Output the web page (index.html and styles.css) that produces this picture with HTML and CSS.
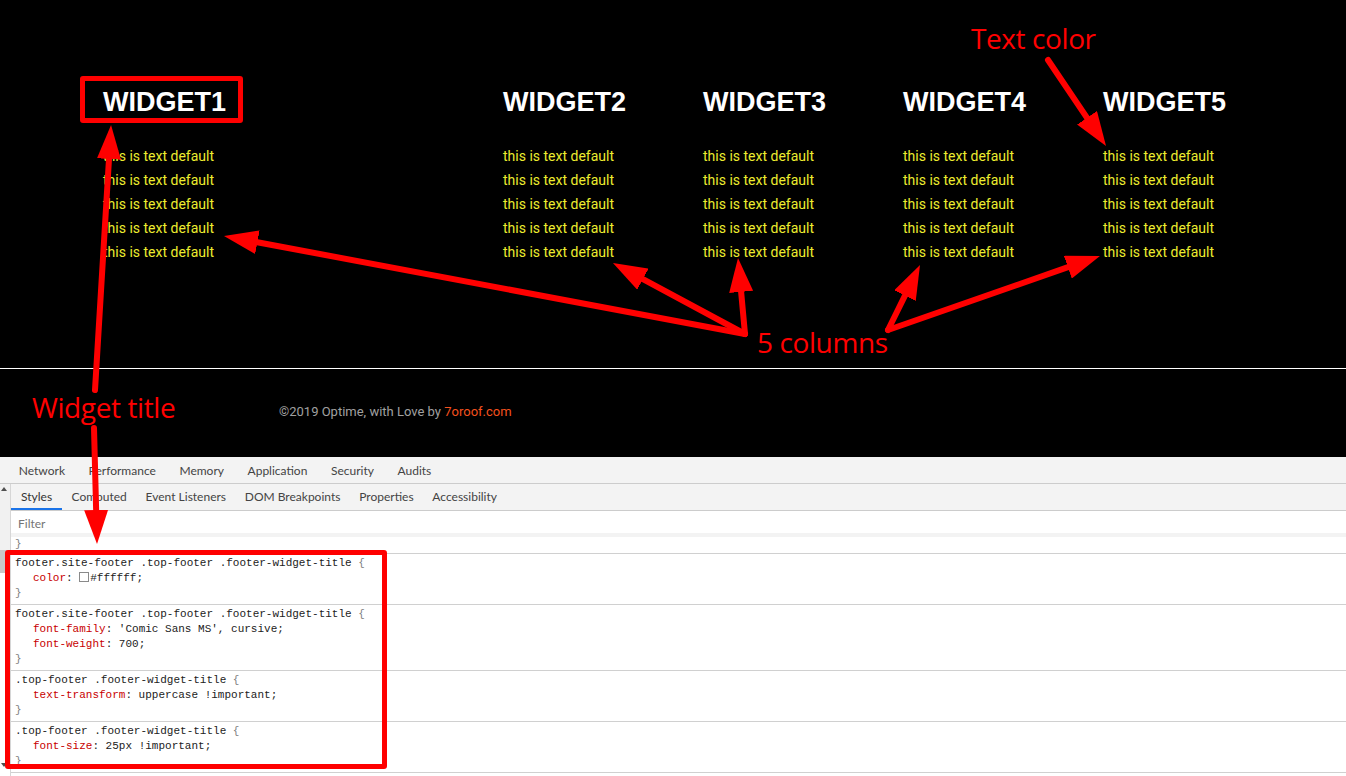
FILE: index.html
```html
<!DOCTYPE html>
<html lang="en">
<head>
<meta charset="utf-8">
<title>Footer widgets</title>
<link rel="stylesheet" href="styles.css">
</head>
<body>
<footer class="site-footer">
  <div class="top-footer">
    <div class="widgets">
      <div class="widget">
        <h3 class="footer-widget-title">Widget1</h3>
        <ul class="widget-list">
          <li>this is text default</li><li>this is text default</li><li>this is text default</li><li>this is text default</li><li>this is text default</li>
        </ul>
      </div>
      <div class="widget">
        <h3 class="footer-widget-title">Widget2</h3>
        <ul class="widget-list">
          <li>this is text default</li><li>this is text default</li><li>this is text default</li><li>this is text default</li><li>this is text default</li>
        </ul>
      </div>
      <div class="widget">
        <h3 class="footer-widget-title">Widget3</h3>
        <ul class="widget-list">
          <li>this is text default</li><li>this is text default</li><li>this is text default</li><li>this is text default</li><li>this is text default</li>
        </ul>
      </div>
      <div class="widget">
        <h3 class="footer-widget-title">Widget4</h3>
        <ul class="widget-list">
          <li>this is text default</li><li>this is text default</li><li>this is text default</li><li>this is text default</li><li>this is text default</li>
        </ul>
      </div>
      <div class="widget">
        <h3 class="footer-widget-title">Widget5</h3>
        <ul class="widget-list">
          <li>this is text default</li><li>this is text default</li><li>this is text default</li><li>this is text default</li><li>this is text default</li>
        </ul>
      </div>
    </div>
  </div>
  <div class="bottom-footer">
    <p class="copyright">©2019 Optime, with Love by <a class="copyright-link" href="#">7oroof.com</a></p>
  </div>
</footer>

<section class="devtools">
  <nav class="main-tabs">
    <span class="tab">Network</span>
    <span class="tab">Performance</span>
    <span class="tab">Memory</span>
    <span class="tab">Application</span>
    <span class="tab">Security</span>
    <span class="tab">Audits</span>
  </nav>
  <div class="panel">
    <div class="scroll-strip">
      <div class="scroll-top"><span class="arrow-up"></span><span class="thumb"></span></div>
      <span class="arrow-down"></span>
    </div>
    <div class="pane">
      <nav class="sub-tabs">
        <span class="subtab active">Styles</span>
        <span class="subtab">Computed</span>
        <span class="subtab">Event Listeners</span>
        <span class="subtab">DOM Breakpoints</span>
        <span class="subtab">Properties</span>
        <span class="subtab">Accessibility</span>
      </nav>
      <div class="filter">Filter</div>
      <div class="rule rule-tail"><span class="brace">}</span></div>
      <div class="rule">
        <div class="line"><span class="sel">footer.site-footer .top-footer .footer-widget-title</span> <span class="brace">{</span></div>
        <div class="line decl"><span class="prop">color</span>: <span class="swatch"></span>#ffffff;</div>
        <div class="line"><span class="brace">}</span></div>
      </div>
      <div class="rule">
        <div class="line"><span class="sel">footer.site-footer .top-footer .footer-widget-title</span> <span class="brace">{</span></div>
        <div class="line decl"><span class="prop">font-family</span>: 'Comic Sans MS', cursive;</div>
        <div class="line decl"><span class="prop">font-weight</span>: 700;</div>
        <div class="line"><span class="brace">}</span></div>
      </div>
      <div class="rule">
        <div class="line"><span class="sel">.top-footer .footer-widget-title</span> <span class="brace">{</span></div>
        <div class="line decl"><span class="prop">text-transform</span>: uppercase !important;</div>
        <div class="line"><span class="brace">}</span></div>
      </div>
      <div class="rule">
        <div class="line"><span class="sel">.top-footer .footer-widget-title</span> <span class="brace">{</span></div>
        <div class="line decl"><span class="prop">font-size</span>: 25px !important;</div>
        <div class="line"><span class="brace">}</span></div>
      </div>
    </div>
  </div>
</section>

<svg class="arrows" width="1346" height="776" viewBox="0 0 1346 776" aria-hidden="true">
  <defs>
    <marker id="head" markerUnits="userSpaceOnUse" markerWidth="34" markerHeight="24" refX="10" refY="12" orient="auto">
      <path d="M0,0 L34,12 L0,24 Z" fill="#ff0000"/>
    </marker>
  </defs>
  <g stroke="#ff0000" stroke-width="6" stroke-linecap="round" fill="none" marker-end="url(#head)">
    <line x1="1048" y1="60" x2="1092.6" y2="126.1"/>
    <line x1="95" y1="390" x2="109.6" y2="149"/>
    <line x1="94" y1="428" x2="96.4" y2="520"/>
    <line x1="745" y1="334" x2="247.6" y2="240.4"/>
    <line x1="745" y1="334" x2="634.1" y2="274.4"/>
    <line x1="745" y1="334" x2="740.2" y2="281.9"/>
    <line x1="888" y1="330" x2="909.4" y2="286.6"/>
    <line x1="888" y1="330" x2="1077.3" y2="263.9"/>
  </g>
</svg>

<div class="callout callout-title"></div>
<div class="callout callout-rules"></div>
<div class="note note-text-color">Text color</div>
<div class="note note-columns">5 columns</div>
<div class="note note-widget-title">Widget title</div>
</body>
</html>
```

FILE: styles.css
```css
html, body {
  margin: 0;
  padding: 0;
  background: #000;
}

body {
  width: 1346px;
  height: 776px;
  overflow: hidden;
  position: relative;
}

/* ---------- footer ---------- */
.site-footer {
  background: #000;
}

.top-footer {
  box-sizing: border-box;
  height: 369px;
  border-bottom: 1px solid #fff;
  padding: 87px 0 0 103px;
}

.widgets {
  display: grid;
  grid-template-columns: 400px repeat(4, 200px);
}

.footer-widget-title {
  margin: 0 0 27px;
  color: #ffffff;
  font-family: "Comic Sans MS", "Liberation Sans", sans-serif;
  font-weight: 700;
  font-size: 27px;
  line-height: 30px;
  text-transform: uppercase;
}

.widget-list {
  list-style: none;
  margin: 0;
  padding: 0;
  font-family: Roboto, "Liberation Sans", sans-serif;
  font-size: 14px;
  line-height: 24px;
  color: #eded2f;
}

.bottom-footer {
  box-sizing: border-box;
  height: 88px;
  display: flex;
  align-items: center;
  padding: 0 0 4px 279px;
}

.copyright {
  margin: 0;
  font-family: Roboto, "Liberation Sans", sans-serif;
  font-size: 13px;
  color: #a0a0a0;
}

.copyright-link {
  color: #f4511e;
  text-decoration: none;
}

/* ---------- devtools ---------- */
.devtools {
  height: 319px;
  background: #fff;
  font-family: Lato, "Noto Sans", sans-serif;
  font-size: 12px;
  color: #333;
}

.main-tabs {
  height: 26px;
  background: #f3f3f3;
  border-bottom: 1px solid #cccccc;
  display: flex;
  align-items: center;
  padding-left: 7px;
}

.tab {
  padding: 0 11.8px;
  color: #444;
}

.panel {
  display: flex;
  height: 292px;
}

.scroll-strip {
  width: 10px;
  flex: none;
  border-right: 1px solid #d6d6d6;
  background: #fff;
  position: relative;
}

.scroll-top {
  height: 89px;
  background: #f1f1f1;
  position: relative;
}

.thumb {
  position: absolute;
  left: 0;
  bottom: 0;
  width: 9px;
  height: 23px;
  background: #c8c8c8;
}

.arrow-up {
  position: absolute;
  left: 1px;
  top: 3px;
  width: 0;
  height: 0;
  border-left: 3px solid transparent;
  border-right: 3px solid transparent;
  border-bottom: 4px solid #505050;
}

.arrow-down {
  position: absolute;
  left: 1px;
  bottom: 9px;
  width: 0;
  height: 0;
  border-left: 3px solid transparent;
  border-right: 3px solid transparent;
  border-top: 4px solid #505050;
}

.pane {
  flex: 1;
  min-width: 0;
}

.sub-tabs {
  height: 26px;
  background: #f3f3f3;
  border-bottom: 1px solid #cccccc;
  display: flex;
}

.subtab {
  padding: 0 9.4px;
  line-height: 26px;
  color: #444;
}

.subtab.active {
  padding: 0 10px;
  color: #333;
  box-shadow: inset 0 -2px 0 #1a73e8;
}

.filter {
  height: 22px;
  line-height: 26px;
  padding-left: 7px;
  color: #757575;
  border-bottom: 4px solid #f3f3f3;
}

.rule {
  font-family: "Liberation Mono", "DejaVu Sans Mono", monospace;
  font-size: 11px;
  line-height: 15px;
  color: #222;
  padding: 2px 0 3px 4px;
  border-bottom: 1px solid #d0d0d0;
  white-space: nowrap;
}

.rule-tail {
  padding: 0 0 1px 4px;
}

.line {
  height: 15px;
}

.sel {
  color: #222;
}

.brace {
  color: #808080;
}

.decl {
  padding-left: 18px;
}

.prop {
  color: #c80000;
}

.swatch {
  display: inline-block;
  box-sizing: border-box;
  width: 10px;
  height: 10px;
  border: 1px solid #8a8a8a;
  background: #fff;
  margin-right: 1px;
  vertical-align: -1px;
}

/* ---------- annotations ---------- */
.arrows {
  position: absolute;
  left: 0;
  top: 0;
  pointer-events: none;
}

.callout {
  position: absolute;
  box-sizing: border-box;
  border: 5px solid #ff0000;
  border-radius: 3px;
  pointer-events: none;
}

.callout-title {
  left: 80px;
  top: 76px;
  width: 163px;
  height: 47px;
}

.callout-rules {
  left: 5px;
  top: 550px;
  width: 382px;
  height: 219px;
}

.note {
  position: absolute;
  color: #ff0000;
  font-family: "Open Sans", "Liberation Sans", sans-serif;
  font-size: 28px;
  line-height: 28px;
  letter-spacing: -0.4px;
  white-space: nowrap;
}

.note-text-color {
  left: 971px;
  top: 24px;
}

.note-columns {
  left: 757px;
  top: 328px;
}

.note-widget-title {
  left: 32px;
  top: 393px;
}
```
